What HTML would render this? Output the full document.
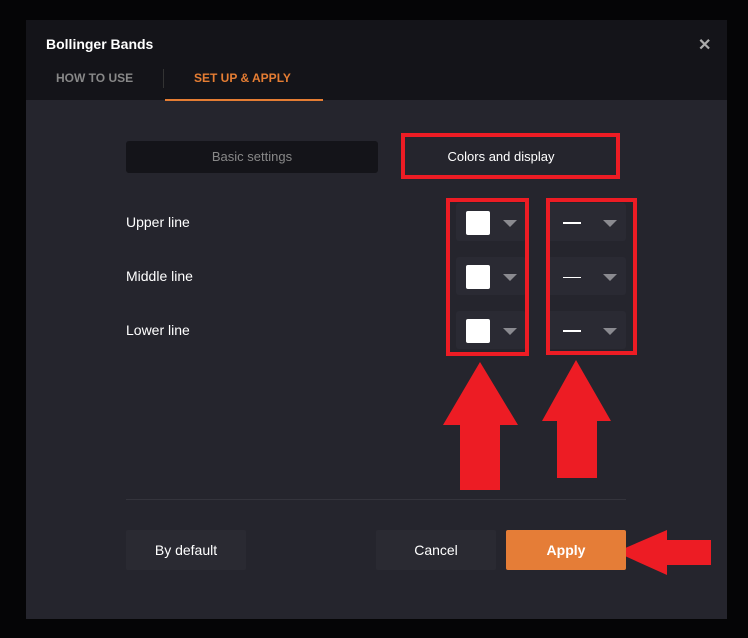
<!DOCTYPE html>
<html><head><style>
body{margin:0;width:748px;height:638px;background:#050506;position:relative;overflow:hidden;font-family:"Liberation Sans",sans-serif;}
.a{position:absolute}
.dlg{left:26px;top:20px;width:701px;height:599px;background:#25252d}
.hdr{left:26px;top:20px;width:701px;height:80px;background:#141419}
.t{color:#fff}
.sel{background:#2a2a33;border-radius:3px}
.sw{width:24px;height:24px;background:#fff;border-radius:2px}
.tri{width:0;height:0;border-left:7px solid transparent;border-right:7px solid transparent;border-top:7px solid #8a8a90}
.rb{border:4px solid #ed1c24;box-sizing:border-box}
.btn{height:40px;width:120px;background:#2a2a32;border-radius:2px;color:#fff;font-size:14px;text-align:center;line-height:40px}
</style></head><body>
<div class="a dlg"></div>
<div class="a hdr"></div>
<div class="a t" style="left:46px;top:36px;font-size:14px;font-weight:bold">Bollinger Bands</div>
<div class="a" style="left:698px;top:35px;color:#aaa;font-size:16px;font-weight:bold">✕</div>
<div class="a" style="left:56px;top:71px;color:#888;font-size:12px;font-weight:bold">HOW TO USE</div>
<div class="a" style="left:163px;top:69px;width:1px;height:19px;background:#333"></div>
<div class="a" style="left:194px;top:71px;color:#e57d33;font-size:12px;font-weight:bold">SET UP &amp; APPLY</div>
<div class="a" style="left:165px;top:99px;width:158px;height:2px;background:#e57d33"></div>
<div class="a" style="left:126px;top:141px;width:252px;height:32px;background:#141419;border-radius:3px;color:#888;font-size:13px;text-align:center;line-height:32px">Basic settings</div>
<div class="a" style="left:378px;top:141px;width:248px;height:32px;background:#25252d"></div>
<div class="a" style="left:401px;top:141px;width:200px;height:32px;color:#fff;font-size:13px;text-align:center;line-height:32px">Colors and display</div>
<div class="a rb" style="left:401px;top:133px;width:219px;height:46px"></div>

<div class="a t" style="left:126px;top:214px;font-size:14px">Upper line</div>
<div class="a t" style="left:126px;top:268px;font-size:14px">Middle line</div>
<div class="a t" style="left:126px;top:322px;font-size:14px">Lower line</div>

<div class="a sel" style="left:456px;top:203px;width:70px;height:38px"></div>
<div class="a sel" style="left:456px;top:257px;width:70px;height:38px"></div>
<div class="a sel" style="left:456px;top:311px;width:70px;height:38px"></div>
<div class="a sel" style="left:546px;top:203px;width:80px;height:38px"></div>
<div class="a sel" style="left:546px;top:257px;width:80px;height:38px"></div>
<div class="a sel" style="left:546px;top:311px;width:80px;height:38px"></div>

<div class="a sw" style="left:466px;top:211px"></div>
<div class="a sw" style="left:466px;top:265px"></div>
<div class="a sw" style="left:466px;top:319px"></div>
<div class="a tri" style="left:503px;top:220px"></div>
<div class="a tri" style="left:503px;top:274px"></div>
<div class="a tri" style="left:503px;top:328px"></div>
<div class="a" style="left:563px;top:222px;width:18px;height:2px;background:#fff"></div>
<div class="a" style="left:563px;top:277px;width:18px;height:1px;background:#fff"></div>
<div class="a" style="left:563px;top:330px;width:18px;height:2px;background:#fff"></div>
<div class="a tri" style="left:603px;top:220px"></div>
<div class="a tri" style="left:603px;top:274px"></div>
<div class="a tri" style="left:603px;top:328px"></div>

<div class="a rb" style="left:446px;top:198px;width:83px;height:158px"></div>
<div class="a rb" style="left:546px;top:198px;width:91px;height:157px"></div>

<svg class="a" style="left:0;top:0" width="748" height="638">
<polygon points="480,362 518,425 500,425 500,490 460,490 460,425 443,425" fill="#ed1c24"/>
<polygon points="576,360 611,421 597,421 597,478 557,478 557,421 542,421" fill="#ed1c24"/>
<polygon points="616,552 667,530 667,540 711,540 711,565 667,565 667,575" fill="#ed1c24"/>
</svg>

<div class="a" style="left:126px;top:499px;width:500px;height:1px;background:#34343c"></div>
<div class="a btn" style="left:126px;top:530px">By default</div>
<div class="a btn" style="left:376px;top:530px">Cancel</div>
<div class="a btn" style="left:506px;top:530px;background:#e57d37;font-weight:bold">Apply</div>
</body></html>
